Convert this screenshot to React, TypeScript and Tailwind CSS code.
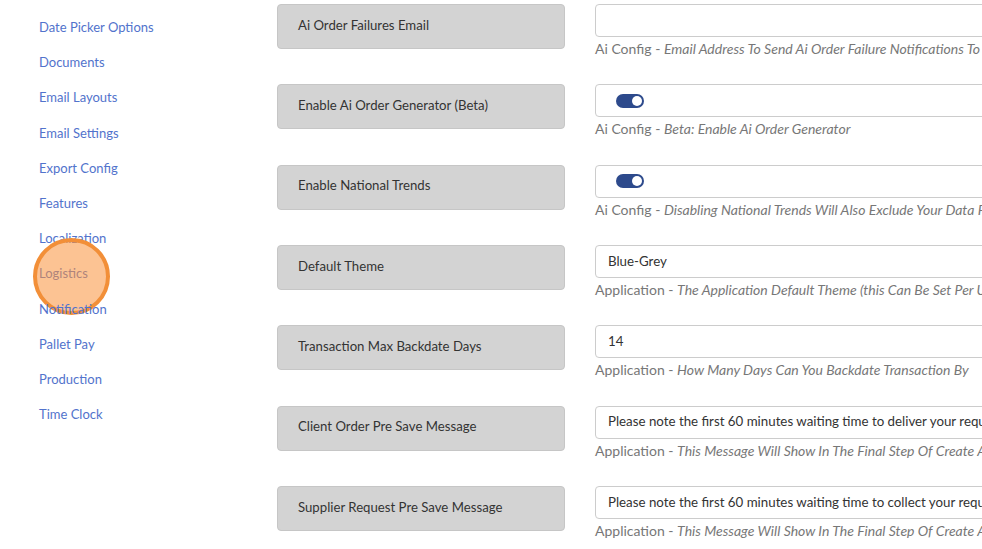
import { ReactNode } from "react";

const links = [
  "Customer Portal",
  "Date Picker Options",
  "Documents",
  "Email Layouts",
  "Email Settings",
  "Export Config",
  "Features",
  "Localization",
  "Logistics",
  "Notification",
  "Pallet Pay",
  "Production",
  "Time Clock",
];

function Toggle() {
  return (
    <div className="flex h-[14px] w-[28px] items-center justify-end rounded-full bg-[#2d4a8c] px-[2px]">
      <div className="h-[10px] w-[10px] rounded-full bg-white" />
    </div>
  );
}

function TextBox({ children }: { children?: ReactNode }) {
  return (
    <div className="flex h-[33px] w-[640px] shrink-0 items-center whitespace-nowrap rounded border border-[#cccccc] bg-white pl-3 text-[13.3px] text-[#333]">
      {children}
    </div>
  );
}

function ToggleBox() {
  return (
    <div className="flex h-[33px] w-[640px] shrink-0 items-center rounded border border-[#cccccc] bg-white pl-5">
      <Toggle />
    </div>
  );
}

type Row = {
  label: string;
  field: ReactNode;
  group: string;
  help: string;
};

const rows: Row[] = [
  {
    label: "Ai Order Failures Email",
    field: <TextBox />,
    group: "Ai Config",
    help: "Email Address To Send Ai Order Failure Notifications To",
  },
  {
    label: "Enable Ai Order Generator (Beta)",
    field: <ToggleBox />,
    group: "Ai Config",
    help: "Beta: Enable Ai Order Generator",
  },
  {
    label: "Enable National Trends",
    field: <ToggleBox />,
    group: "Ai Config",
    help: "Disabling National Trends Will Also Exclude Your Data From National Trends",
  },
  {
    label: "Default Theme",
    field: <TextBox>Blue-Grey</TextBox>,
    group: "Application",
    help: "The Application Default Theme (this Can Be Set Per User)",
  },
  {
    label: "Transaction Max Backdate Days",
    field: <TextBox>14</TextBox>,
    group: "Application",
    help: "How Many Days Can You Backdate Transaction By",
  },
  {
    label: "Client Order Pre Save Message",
    field: (
      <TextBox>
        Please note the first 60 minutes waiting time to deliver your request is free of charge
      </TextBox>
    ),
    group: "Application",
    help: "This Message Will Show In The Final Step Of Create An Order",
  },
  {
    label: "Supplier Request Pre Save Message",
    field: (
      <TextBox>
        Please note the first 60 minutes waiting time to collect your request is free of charge
      </TextBox>
    ),
    group: "Application",
    help: "This Message Will Show In The Final Step Of Create A Request",
  },
];

export default function App() {
  return (
    <div
      className="flex h-[549px] w-[982px] overflow-hidden bg-white"
      style={{ fontFamily: "Lato, 'Open Sans', sans-serif" }}
    >
      {/* settings menu */}
      <aside className="w-[277px] shrink-0 pl-[39px]">
        <ul className="mt-[-25px]">
          {links.map((l) => (
            <li key={l} className="flex h-[35.2px] items-center">
              <span className="relative text-[13px] text-[#5273cc]">
                {l}
                {l === "Logistics" && (
                  <span className="absolute left-[-6px] top-[-26px] h-[77px] w-[77px] rounded-full border-4 border-[#f28f38] bg-[#f9923a]/55" />
                )}
              </span>
            </li>
          ))}
        </ul>
      </aside>

      {/* settings rows */}
      <main className="flex shrink-0 flex-col pt-[4px]">
        {rows.map((r) => (
          <div key={r.label} className="flex h-[80.33px] shrink-0 gap-[30px]">
            <div className="flex h-[45px] w-[288px] shrink-0 items-center rounded border border-[#c6c6c6] bg-[#d3d3d3] pb-[2px] pl-5 text-[13.2px] text-[#333]">
              {r.label}
            </div>
            <div className="flex flex-col">
              {r.field}
              <p className="mt-[2px] whitespace-nowrap text-[14px] leading-[20px] text-[#777]">
                {r.group} - <em>{r.help}</em>
              </p>
            </div>
          </div>
        ))}
      </main>
    </div>
  );
}
